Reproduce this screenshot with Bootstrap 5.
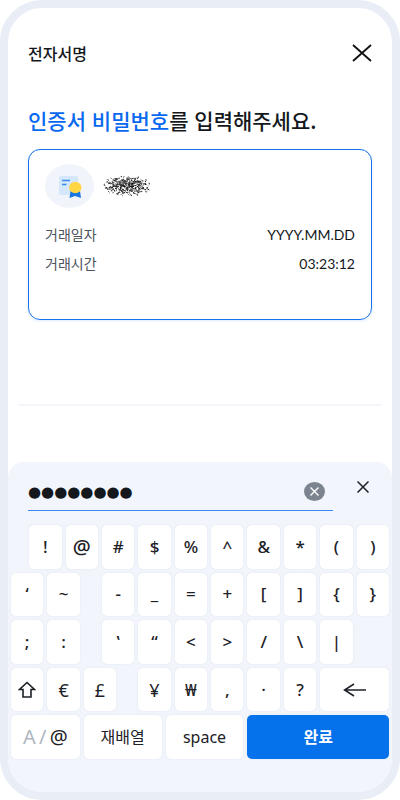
<!DOCTYPE html>
<html lang="ko">
<head>
<meta charset="utf-8">
<meta name="viewport" content="width=device-width, initial-scale=1">
<title>전자서명</title>
<link href="https://cdn.jsdelivr.net/npm/bootstrap@5.3.0/dist/css/bootstrap.min.css" rel="stylesheet">
<style>
  body { font-family: "Noto Sans CJK KR", "Noto Sans", sans-serif; color: #14181d; background: #fff; }
  .phone { border: 8px solid #e9edf6; border-radius: 42px; background: #fff; }
  .top-bar { padding-top: 33px; }
  .top-title { font-size: 16px; line-height: 24px; font-weight: 500; }
  .headline { font-size: 21px; line-height: 28px; font-weight: 500; margin-top: 41px; }
  .headline span { color: #0869f0; }
  .cert { border: 1px solid #1672ea; border-radius: 12px; margin-top: 15px; min-height: 171px; padding: 14px 16px; box-shadow: 0 1px 3px #1672ea22; }
  .cert-icon { width: 49px; height: 44px; border-radius: 50%; background: #f1f5fb; }
  .cert dl { font-size: 14px; line-height: 21px; row-gap: 8px; margin-top: 16px; }
  .cert dt { font-weight: 400; color: #4d535c; }
  .cert dd { font-family: Lato, "Noto Sans", sans-serif; }
  .rule { border-top: 2px solid #f3f6fa; margin: 0 10px; }
  .pad { background: #f2f5fb; border-radius: 16px 16px 34px 34px; padding: 11px 3px 33px; }
  .entry { padding: 0 20px 0 17px; }
  .secret { border-bottom: 1px solid #3d86ea; height: 38px; }
  .secret input { font-family: "DejaVu Sans", sans-serif; font-size: 15px; line-height: 24px; color: #14181d; outline: 0; min-width: 0; }
  .plain { border: 0; background: none; padding: 0; line-height: 0; color: inherit; }
  .keys { display: grid; grid-template-columns: repeat(21, minmax(0, 1fr)); grid-template-rows: repeat(5, minmax(0, 1fr)); gap: 4px; height: 234px; margin-top: 14px; }
  .key { grid-column: span 2; background: #fff; border: 0; border-radius: 5px; padding: 0; box-shadow: 0 0 2px #dbe3ef; color: #1c2127; font-family: "Noto Sans", "Noto Sans CJK KR", sans-serif; font-size: 17px; line-height: 24px; font-weight: 500; display: flex; align-items: center; justify-content: center; }
  .span-4 { grid-column: span 4; }
  .span-8 { grid-column: span 8; }
  .pair { grid-column: span 9; display: grid; grid-template-columns: 1fr 1fr; gap: 4px; }
  .pair .key { grid-column: span 1; font-size: 16px; font-weight: 400; }
  .wide-sign { font-size: 20px; }
  .thin-sign { font-weight: 400; font-size: 18px; }
  .mode { font-size: 20px; font-weight: 400; }
  .mode span { color: #aeb6c1; }
  .done { background: #0571ea; color: #fff; font-size: 16px; font-weight: 700; }
</style>
<script src="https://cdn.jsdelivr.net/npm/bootstrap@5.3.0/dist/js/bootstrap.bundle.min.js"></script>
</head>
<body>
<div class="phone min-vh-100 d-flex flex-column">
  <main class="flex-grow-1">
    <div class="px-3 mx-1">
      <header class="top-bar d-flex justify-content-between align-items-center">
        <h1 class="top-title mb-0">전자서명</h1>
        <button class="plain" type="button" aria-label="닫기"><svg width="20" height="18" viewBox="0 0 20 18"><path d="M1 1 19 17M19 1 1 17" stroke="#111" stroke-width="1.8" fill="none"/></svg></button>
      </header>
      <h2 class="headline mb-0"><span>인증서 비밀번호</span>를 입력해주세요.</h2>
      <section class="cert">
        <div class="d-flex align-items-center gap-2">
          <div class="cert-icon d-flex align-items-center justify-content-center">
            <svg width="24" height="24" viewBox="0 0 24 24"><rect x="1" y="2" width="19" height="19" rx="1.5" fill="#d5e7fc"/><path d="M4 6.500h8M4 10.500h4.500" stroke="#3b8cf0" stroke-width="1.300"/><path d="m12.500 17-1 7 5.500-2 6 2-1-7z" fill="#1876e2"/><ellipse cx="17.300" cy="13.500" rx="6.200" ry="5.700" fill="#ffd644"/></svg>
          </div>
          <svg id="scribble" width="52" height="26" viewBox="0 0 52 26" role="img" aria-label="이름 가림"></svg>
        </div>
        <dl class="d-grid mb-0">
          <div class="d-flex justify-content-between"><dt>거래일자</dt><dd class="mb-0">YYYY.MM.DD</dd></div>
          <div class="d-flex justify-content-between"><dt>거래시간</dt><dd class="mb-0">03:23:12</dd></div>
        </dl>
      </section>
    </div>
  </main>
  <div class="rule mb-5"></div>
  <section class="pad mt-2">
    <div class="entry d-flex gap-4">
      <div class="secret d-flex align-items-center flex-grow-1 pe-2">
        <input class="border-0 bg-transparent p-0 flex-grow-1" type="text" value="●●●●●●●●" readonly aria-label="인증서 비밀번호">
        <button class="plain" type="button" aria-label="지우기"><svg width="21" height="19" viewBox="0 0 21 19"><ellipse cx="10.500" cy="9.500" rx="10.500" ry="9.500" fill="#7c858f"/><path d="m6.500 5.500 8 8m0-8-8 8" stroke="#fff" stroke-width="1.400"/></svg></button>
      </div>
      <button class="plain align-self-start pt-2" type="button" aria-label="키패드 닫기"><svg width="12" height="12" viewBox="0 0 12 12"><path d="m.5.5 11 11m0-11-11 11" stroke="#1c2127" stroke-width="1.500"/></svg></button>
    </div>
    <div class="keys">
      <i></i><button class="key">!</button><button class="key wide-sign">@</button><button class="key">#</button><button class="key">$</button><button class="key">%</button><button class="key">^</button><button class="key">&amp;</button><button class="key">*</button><button class="key">(</button><button class="key">)</button>
      <button class="key">‘</button><button class="key">~</button><i></i><button class="key">-</button><button class="key">_</button><button class="key">=</button><button class="key">+</button><button class="key">[</button><button class="key">]</button><button class="key">{</button><button class="key">}</button>
      <button class="key">;</button><button class="key">:</button><i></i><button class="key">‛</button><button class="key">“</button><button class="key">&lt;</button><button class="key">&gt;</button><button class="key">/</button><button class="key">\</button><button class="key">|</button><i></i><i></i>
      <button class="key" aria-label="Shift"><svg width="18" height="18" viewBox="0 0 18 18"><path d="M9 1.500 1.500 8.500H5v7.500h8V8.500h3.500z" fill="none" stroke="#1c2127" stroke-width="1.600"/></svg></button><button class="key thin-sign">€</button><button class="key thin-sign">£</button><i></i><button class="key thin-sign">¥</button><button class="key">₩</button><button class="key">,</button><button class="key">·</button><button class="key">?</button><button class="key span-4" aria-label="지우기"><svg width="24" height="14" viewBox="0 0 24 14"><path d="M23 7H1.500M11 1 1.500 7l9.500 6" fill="none" stroke="#1c2127" stroke-width="1.500"/></svg></button>
      <button class="key span-4 mode"><span>A&thinsp;/&thinsp;</span>@</button>
      <div class="pair"><button class="key">재배열</button><button class="key">space</button></div>
      <button class="key span-8 done">완료</button>
    </div>
  </section>
</div>
<script>
  // Speckled mask over the holder's name
  let seed = 7, d = "";
  const rnd = () => (seed = (seed * 16807) % 2147483647) / 2147483647;
  for (let i = 0; i < 480; i++) {
    const a = rnd() * 6.283, r = Math.pow(rnd(), .6);
    const x = 24 + Math.cos(a) * r * 22 + (rnd() - .5) * 8, y = 13 + Math.sin(a) * r * 8 + (rnd() - .5) * 6;
    d += `M${x.toFixed(1)} ${y.toFixed(1)}l${(rnd() * 1.6).toFixed(1)} ${(rnd() * 1.2 - .4).toFixed(1)}`;
  }
  document.getElementById("scribble").innerHTML = `<path d="${d}" stroke="#111" stroke-width=".9" fill="none"/>`;
</script>
</body>
</html>
